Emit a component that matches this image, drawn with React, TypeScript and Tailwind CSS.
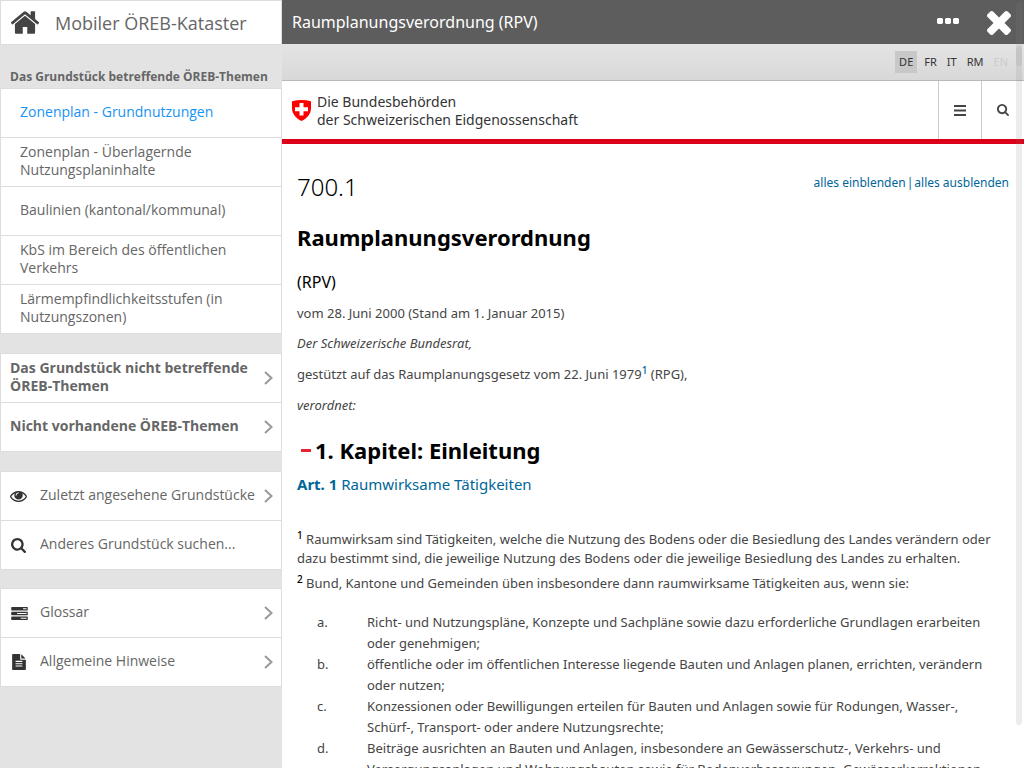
import { useState, type ReactNode } from "react";

type IconProps = { box: string; d: string; className: string };

function Icon({ box, d, className }: IconProps) {
  return (
    <svg viewBox={box} className={className} fill="currentColor" aria-hidden="true">
      <path d={d} />
    </svg>
  );
}

const HOME = "M1472 992v480q0 26-19 45t-45 19h-384v-384h-256v384h-384q-26 0-45-19t-19-45v-480q0-1 .5-3t.5-3l575-474 575 474q1 2 1 6zm223-69l-62 74q-8 9-21 11h-3q-13 0-21-7l-692-577-692 577q-12 8-24 7-13-2-21-11l-62-74q-8-10-7-23.5t11-21.5l719-599q32-26 76-26t76 26l244 204v-195q0-14 9-23t23-9h192q14 0 23 9t9 23v408l219 182q10 8 11 21.5t-7 23.5z";
const SEARCH = "M1216 832q0-185-131.5-316.5t-316.5-131.5-316.5 131.5-131.5 316.5 131.5 316.5 316.5 131.5 316.5-131.5 131.5-316.5zm512 832q0 52-38 90t-90 38q-54 0-90-38l-343-342q-179 124-399 124-143 0-273.5-55.5t-225-150-150-225-55.5-273.5 55.5-273.5 150-225 225-150 273.5-55.5 273.5 55.5 225 150 150 225 55.5 273.5q0 220-124 399l343 343q37 37 37 90z";
const EYE = "M1664 960q-152-236-381-353 61 104 61 225 0 185-131.5 316.5t-316.5 131.5-316.5-131.5-131.5-316.5q0-121 61-225-229 117-381 353 133 205 333.5 326.5t434.5 121.5 434.5-121.5 333.5-326.5zm-720-384q0-20-14-34t-34-14q-125 0-214.5 89.5t-89.5 214.5q0 20 14 34t34 14 34-14 14-34q0-86 61-147t147-61q20 0 34-14t14-34zm848 384q0 34-20 69-140 230-376.5 368.5t-499.5 138.5-499.5-139-376.5-368q-20-35-20-69t20-69q140-229 376.5-368t499.5-139 499.5 139 376.5 368q20 35 20 69z";
const DOTS = "M576 736v192q0 40-28 68t-68 28h-192q-40 0-68-28t-28-68v-192q0-40 28-68t68-28h192q40 0 68 28t28 68zm512 0v192q0 40-28 68t-68 28h-192q-40 0-68-28t-28-68v-192q0-40 28-68t68-28h192q40 0 68 28t28 68zm512 0v192q0 40-28 68t-68 28h-192q-40 0-68-28t-28-68v-192q0-40 28-68t68-28h192q40 0 68 28t28 68z";
const TIMES = "M1490 1322q0 40-28 68l-136 136q-28 28-68 28t-68-28l-294-294-294 294q-28 28-68 28t-68-28l-136-136q-28-28-28-68t28-68l294-294-294-294q-28-28-28-68t28-68l136-136q28-28 68-28t68 28l294 294 294-294q28-28 68-28t68 28l136 136q28 28 28 68t-28 68l-294 294 294 294q28 28 28 68z";
const FILE = "M1596 476q14 14 28 36h-472v-472q22 14 36 28zm-476 164h544v1056q0 40-28 68t-68 28h-1344q-40 0-68-28t-28-68v-1600q0-40 28-68t68-28h800v544q0 40 28 68t68 28zm160 736v-64q0-14-9-23t-23-9h-704q-14 0-23 9t-9 23v64q0 14 9 23t23 9h704q14 0 23-9t9-23zm0-256v-64q0-14-9-23t-23-9h-704q-14 0-23 9t-9 23v64q0 14 9 23t23 9h704q14 0 23-9t9-23zm0-256v-64q0-14-9-23t-23-9h-704q-14 0-23 9t-9 23v64q0 14 9 23t23 9h704q14 0 23-9t9-23z";
const TASKS = "M1024 1408h640v-128h-640v128zm-384-512h1024v-128h-1024v128zm640-512h384v-128h-384v128zm512 832v256q0 26-19 45t-45 19h-1664q-26 0-45-19t-19-45v-256q0-26 19-45t45-19h1664q26 0 45 19t19 45zm0-512v256q0 26-19 45t-45 19h-1664q-26 0-45-19t-19-45v-256q0-26 19-45t45-19h1664q26 0 45 19t19 45zm0-512v256q0 26-19 45t-45 19h-1664q-26 0-45-19t-19-45v-256q0-26 19-45t45-19h1664q26 0 45 19t19 45z";

const themes = [
  "Zonenplan - Grundnutzungen",
  "Zonenplan - Überlagernde Nutzungsplaninhalte",
  "Baulinien (kantonal/kommunal)",
  "KbS im Bereich des öffentlichen Verkehrs",
  "Lärmempfindlichkeitsstufen (in Nutzungszonen)",
];

const languages = ["DE", "FR", "IT", "RM", "EN"];

const letters = [
  { key: "a.", text: "Richt- und Nutzungspläne, Konzepte und Sachpläne sowie dazu erforderliche Grundlagen erarbeiten oder genehmigen;" },
  { key: "b.", text: "öffentliche oder im öffentlichen Interesse liegende Bauten und Anlagen planen, errichten, verändern oder nutzen;" },
  { key: "c.", text: "Konzessionen oder Bewilligungen erteilen für Bauten und Anlagen sowie für Rodungen, Wasser-, Schürf-, Transport- oder andere Nutzungsrechte;" },
  { key: "d.", text: "Beiträge ausrichten an Bauten und Anlagen, insbesondere an Gewässerschutz-, Verkehrs- und Versorgungsanlagen und Wohnungsbauten sowie für Bodenverbesserungen, Gewässerkorrektionen" },
];

function Chevron() {
  return (
    <svg viewBox="0 0 9 14" className="h-[14px] w-[9px] shrink-0" fill="none" stroke="#999" strokeWidth="2" aria-hidden="true">
      <path d="M1 1l6.500 6L1 13" />
    </svg>
  );
}

function Group({ children, className }: { children: ReactNode; className?: string }) {
  return <ul className={`border border-[#ddd] bg-white divide-y divide-[#ddd] ${className ?? ""}`}>{children}</ul>;
}

function MenuRow({ label, icon, bold, arrow }: { label: string; icon?: ReactNode; bold?: boolean; arrow?: boolean }) {
  return (
    <li>
      <button className="flex min-h-12 w-full items-center pr-2 pl-[9px] text-left leading-[18px]">
        {icon && <span className="flex w-[30px] shrink-0 text-[#333]">{icon}</span>}
        <span className={`grow pb-[2px] ${bold ? "font-bold" : ""}`}>{label}</span>
        {arrow && <Chevron />}
      </button>
    </li>
  );
}

function Sidebar() {
  const [active, setActive] = useState(0);
  return (
    <aside className="w-[282px] shrink-0 bg-[#e3e3e3] text-sm text-[#666]">
      <header className="flex h-[45px] items-center gap-4 border border-[#ddd] bg-white pl-[10px]">
        <a href="#home" aria-label="Startseite" className="text-[#444]">
          <Icon box="97 256 1598 1280" d={HOME} className="h-[23px] w-[28px]" />
        </a>
        <h1 className="text-lg">Mobiler ÖREB-Kataster</h1>
      </header>
      <h2 className="flex h-[43px] items-end pb-[2px] pl-[10px] text-xs leading-[18px] font-bold">Das Grundstück betreffende ÖREB-Themen</h2>
      <Group>
        {themes.map((t, i) => (
          <li key={t}>
            <button
              onClick={() => setActive(i)}
              className={`flex min-h-12 w-full items-center pr-8 pb-[2px] pl-[19px] text-left leading-[18px] ${i === active ? "text-[#1793f5]" : ""}`}
            >
              {t}
            </button>
          </li>
        ))}
      </Group>
      <Group className="mt-[19px]">
        <MenuRow label="Das Grundstück nicht betreffende ÖREB-Themen" bold arrow />
        <MenuRow label="Nicht vorhandene ÖREB-Themen" bold arrow />
      </Group>
      <Group className="mt-[19px]">
        <MenuRow label="Zuletzt angesehene Grundstücke" icon={<Icon box="0 384 1792 1152" d={EYE} className="h-[11px] w-[17px]" />} arrow />
        <MenuRow label="Anderes Grundstück suchen..." icon={<Icon box="64 128 1664 1664" d={SEARCH} className="ml-px size-[15px]" />} />
      </Group>
      <Group className="mt-[18px]">
        <MenuRow label="Glossar" icon={<Icon box="0 128 1792 1408" d={TASKS} className="ml-px h-[13px] w-[17px]" />} arrow />
        <MenuRow label="Allgemeine Hinweise" icon={<Icon box="128 0 1536 1792" d={FILE} className="ml-[2px] h-4 w-[14px]" />} arrow />
      </Group>
    </aside>
  );
}

function Shield() {
  return (
    <svg viewBox="0 0 19 21" className="mt-[19px] h-[21px] w-[19px] shrink-0" aria-hidden="true">
      <path d="M0 1.200Q9.500-1.200 19 1.200V8c0 6-4 10.500-9.500 13C4 18.500 0 14 0 8z" fill="#f00" />
      <path d="M7.500 3h4v4.300H16v4h-4.500v4.200h-4v-4.200H3v-4h4.500z" fill="#fff" />
    </svg>
  );
}

function Article() {
  const [open, setOpen] = useState(true);
  return (
    <article className="px-[15px] pt-[27px] text-[13px] leading-[19px] text-[#454545]">
      <div className="flex items-start justify-between">
        <p className="text-2xl leading-[32px] font-light text-black">700.1</p>
        <p className="mt-1 flex gap-px text-xs text-[#069]">
          <button onClick={() => setOpen(true)}>alles einblenden</button>
          <span>|</span>
          <button onClick={() => setOpen(false)}>alles ausblenden</button>
        </p>
      </div>
      <h1 className="mt-[18px] text-[22px] leading-[32px] font-bold text-black">Raumplanungsverordnung</h1>
      <h2 className="mt-[19px] text-base leading-[20px] text-black">(RPV)</h2>
      <p className="mt-[12px]">vom 28. Juni 2000 (Stand am 1. Januar 2015)</p>
      <p className="mt-[11px] italic">Der Schweizerische Bundesrat,</p>
      <p className="mt-[12px]">
        gestützt auf das Raumplanungsgesetz vom 22. Juni 1979
        <a href="#fn1" className="text-[#069]"><sup className="text-[10px] font-medium">1</sup></a> (RPG),
      </p>
      <p className="mt-[12px] italic">verordnet:</p>
      <h2 className="mt-[19px] text-[22px] leading-[32px] font-bold text-black">
        <button onClick={() => setOpen(!open)} className="flex items-center">
          <span className="mr-1 ml-1 h-[3px] w-[10px] bg-[#e8222e]" />
          1. Kapitel: Einleitung
        </button>
      </h2>
      <h3 className="mt-[8px] text-[15px] leading-[20px]">
        <a href="#a1" className="text-[#069]"><b>Art. 1</b> Raumwirksame Tätigkeiten</a>
      </h3>
      {open && (
        <div className="mt-[36px]">
          <p>
            <sup className="text-[10px] font-medium text-black">1</sup> Raumwirksam sind Tätigkeiten, welche die Nutzung des Bodens oder die Besiedlung des Landes verändern oder dazu bestimmt sind, die jeweilige Nutzung des Bodens oder die jeweilige Besiedlung des Landes zu erhalten.
          </p>
          <p className="mt-[6px]">
            <sup className="text-[10px] font-medium text-black">2</sup> Bund, Kantone und Gemeinden üben insbesondere dann raumwirksame Tätigkeiten aus, wenn sie:
          </p>
          <dl className="mt-[19px] grid grid-cols-[50px_1fr] pr-[15px] pl-5 leading-[21px]">
            {letters.map((l) => (
              <div key={l.key} className="contents">
                <dt>{l.key}</dt>
                <dd>{l.text}</dd>
              </div>
            ))}
          </dl>
        </div>
      )}
    </article>
  );
}

export default function App() {
  const [lang, setLang] = useState("DE");
  return (
    <div className="relative flex h-screen overflow-hidden bg-white font-['Open_Sans',sans-serif]">
      <Sidebar />
      <main className="min-w-0 grow font-['Noto_Sans',sans-serif]">
        <header className="flex h-11 items-center bg-[#5d5d5d] pr-[13px] pl-[10px] text-white">
          <h1 className="grow text-base">Raumplanungsverordnung (RPV)</h1>
          <button aria-label="Mehr" className="mr-[28px] pb-[2px]">
            <Icon box="192 640 1408 384" d={DOTS} className="h-[6px] w-[22px]" />
          </button>
          <button aria-label="Schliessen" className="pt-[2px]">
            <Icon box="302 366 1188 1188" d={TIMES} className="size-6" />
          </button>
        </header>
        <nav className="flex h-[37px] items-center justify-end border-b border-[#b8b8b8] bg-linear-to-b from-[#e4e4e4] to-[#d8d8d8] pr-[10px] text-[11px] text-[#333]">
          {languages.map((l) => (
            <button
              key={l}
              onClick={() => setLang(l)}
              disabled={l === "EN"}
              className={`h-[22px] px-1 ${l === lang ? "mr-[3px] bg-[#c8c8c8]" : "mr-[2px] disabled:text-[#ccc]"}`}
            >
              {l}
            </button>
          ))}
        </nav>
        <div className="flex h-[63px] border-b-5 border-[#dc0018] pl-[10px]">
          <a href="#admin" className="flex grow gap-[6px] text-sm leading-[18px] text-[#333]">
            <Shield />
            <span className="mt-[12px]">Die Bundesbehörden<br />der Schweizerischen Eidgenossenschaft</span>
          </a>
          <button aria-label="Menü" className="flex w-[43px] items-center justify-center border-l border-[#ccc]">
            <svg viewBox="0 0 12 11" className="h-[11px] w-3" fill="#444" aria-hidden="true">
              <path d="M0 0h12v2H0zM0 4.500h12v2H0zM0 9h12v2H0z" />
            </svg>
          </button>
          <button aria-label="Suchen" className="flex w-[43px] items-center justify-center border-l border-[#ccc] text-[#444]">
            <Icon box="64 128 1664 1664" d={SEARCH} className="size-3" />
          </button>
        </div>
        <Article />
      </main>
      <div className="absolute top-[2px] right-[2px] h-16 w-[6px] rounded-full bg-[#808080]/15" />
      <div className="absolute top-[46px] right-[2px] bottom-[43px] w-[6px] rounded-full bg-[#808080]/15" />
    </div>
  );
}
